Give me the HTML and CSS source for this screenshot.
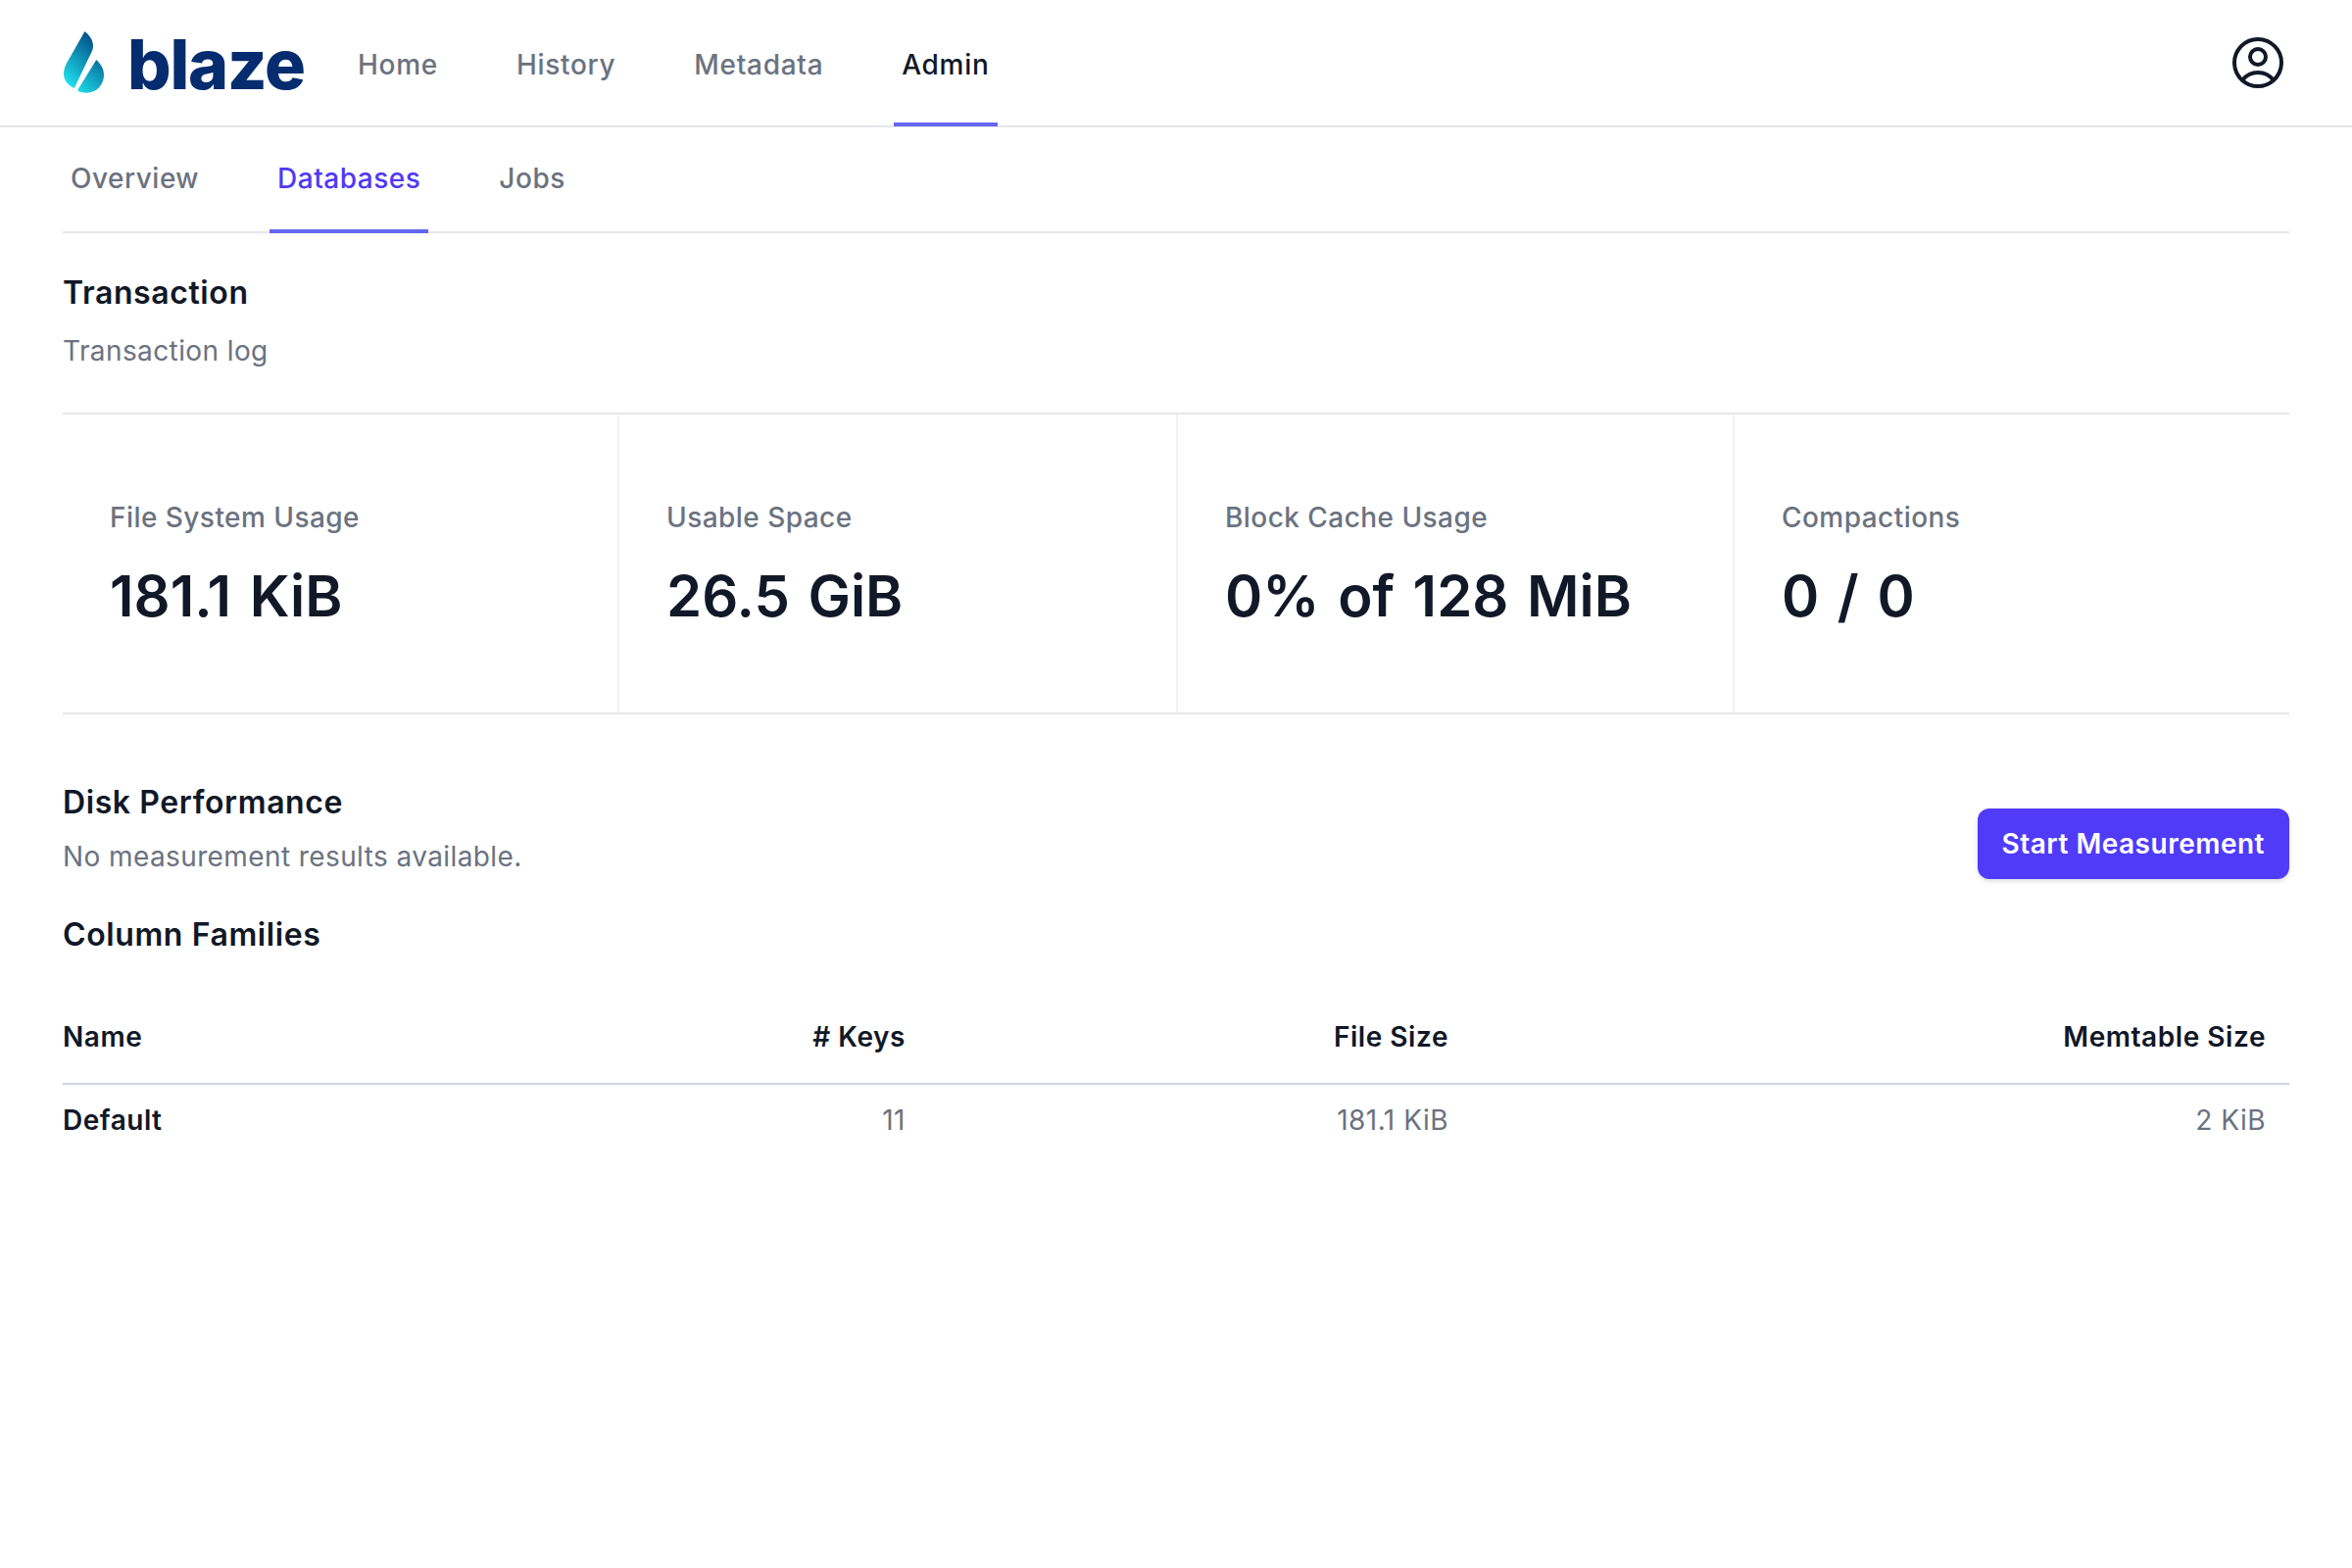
FILE: index.html
```html
<!DOCTYPE html>
<html lang="en">
<head>
    <meta charset="UTF-8">
    <title>Blaze Admin - Databases</title>
    <link rel="stylesheet" href="styles.css">
</head>
<body>
    <header class="top-bar">
        <div class="brand">
            <svg class="brand-drop" viewBox="0 0 42 63" width="42" height="63">
                <defs>
                    <linearGradient id="dropGrad" gradientUnits="userSpaceOnUse" x1="2" y1="56" x2="38" y2="18">
                        <stop offset="0" stop-color="#1fe9f2"/>
                        <stop offset="1" stop-color="#04568c"/>
                    </linearGradient>
                </defs>
                <path fill="url(#dropGrad)" d="M21.5 0C25 3 30 8 30 14.5C30 17 29.5 19 28.5 21L10.8 58C4.5 55 0 50 0 43.5C0 39 1.5 35 3.5 31.5Z"/>
                <path fill="url(#dropGrad)" d="M33.3 29C37.5 33 41 38 41 44.5C41 55 33 62.7 23.5 62.7C20 62.7 17 62 14 60.2Z"/>
            </svg>
            <span class="brand-name">blaze</span>
        </div>
        <nav class="main-nav">
            <a class="main-link">Home</a>
            <a class="main-link">History</a>
            <a class="main-link">Metadata</a>
            <a class="main-link main-link-active">Admin</a>
        </nav>
        <svg class="user-icon" viewBox="0 0 24 24" width="64" height="64" fill="none" stroke="#111827" stroke-width="1.5">
            <path stroke-linecap="round" stroke-linejoin="round" d="M17.982 18.725A7.488 7.488 0 0012 15.75a7.488 7.488 0 00-5.982 2.975m11.963 0a9 9 0 10-11.963 0m11.963 0A8.966 8.966 0 0112 21a8.966 8.966 0 01-5.982-2.275M15 9.75a3 3 0 11-6 0 3 3 0 016 0z"/>
        </svg>
    </header>

    <main class="page">
        <nav class="sub-nav">
            <a class="sub-link">Overview</a>
            <a class="sub-link sub-link-active">Databases</a>
            <a class="sub-link">Jobs</a>
        </nav>

        <section class="intro">
            <h2 class="section-title">Transaction</h2>
            <p class="section-text">Transaction log</p>
        </section>

        <div class="stats">
            <div class="stat">
                <div class="stat-label">File System Usage</div>
                <div class="stat-value">181.1 KiB</div>
            </div>
            <div class="stat">
                <div class="stat-label">Usable Space</div>
                <div class="stat-value">26.5 GiB</div>
            </div>
            <div class="stat">
                <div class="stat-label">Block Cache Usage</div>
                <div class="stat-value">0% of 128 MiB</div>
            </div>
            <div class="stat">
                <div class="stat-label">Compactions</div>
                <div class="stat-value">0 / 0</div>
            </div>
        </div>

        <section class="disk">
            <div class="disk-info">
                <h2 class="section-title">Disk Performance</h2>
                <p class="section-text">No measurement results available.</p>
            </div>
            <button class="primary-btn">Start Measurement</button>
        </section>

        <h2 class="section-title families-title">Column Families</h2>

        <table class="families">
            <thead>
                <tr>
                    <th class="col-name">Name</th>
                    <th class="col-keys">&#35; Keys</th>
                    <th class="col-file">File Size</th>
                    <th class="col-mem">Memtable Size</th>
                </tr>
            </thead>
            <tbody>
                <tr>
                    <td class="row-name">Default</td>
                    <td>11</td>
                    <td>181.1 KiB</td>
                    <td>2 KiB</td>
                </tr>
            </tbody>
        </table>
    </main>
</body>
</html>
```

FILE: styles.css
```css
* {
    box-sizing: border-box;
}

body {
    margin: 0;
    background-color: #fff;
    color: #111827;
    font-family: "Inter", "Noto Sans", sans-serif;
}

.top-bar {
    display: flex;
    align-items: center;
    height: 130px;
    padding: 0 64px 0 65px;
    border-bottom: 2px solid #e5e7eb;
}

.brand {
    display: flex;
    align-items: center;
    gap: 23px;
    width: 300px;
    margin-top: -2px;
}

.brand-name {
    padding-top: 4px;
    color: #052c6e;
    font-size: 70px;
    font-weight: 800;
    letter-spacing: -1.2px;
    line-height: 63px;
}

.main-nav {
    display: flex;
    gap: 64px;
    height: 130px;
    margin-left: -8px;
}

.main-link {
    display: flex;
    align-items: center;
    height: 130px;
    padding: 7px 8px 0;
    border-bottom: 4px solid transparent;
    color: #6b7280;
    font-size: 28px;
    font-weight: 500;
    letter-spacing: 0.7px;
}

.main-link-active {
    border-bottom-color: #6366f1;
    color: #111827;
}

.user-icon {
    margin-left: auto;
}

.page {
    padding: 0 64px;
}

.sub-nav {
    display: flex;
    gap: 64px;
    height: 108px;
    border-bottom: 2px solid #e5e7eb;
}

.sub-link {
    display: flex;
    align-items: center;
    height: 108px;
    padding: 0 8px;
    border-bottom: 4px solid transparent;
    color: #6b7280;
    font-size: 28px;
    font-weight: 500;
    letter-spacing: 0.5px;
}

.sub-link-active {
    border-bottom-color: #6366f1;
    color: #4f39f6;
}

.intro {
    height: 185px;
    padding-top: 41px;
    border-bottom: 2px solid #e5e7eb;
}

.section-title {
    margin: 0;
    font-size: 32px;
    font-weight: 600;
    letter-spacing: 0.6px;
    line-height: 40px;
}

.section-text {
    margin: 0;
    padding-top: 19px;
    color: #6b7280;
    font-size: 28px;
    letter-spacing: 0.4px;
    line-height: 40px;
}

.stats {
    display: grid;
    grid-template-columns: 568px 570px 568px 566px;
    height: 306px;
    border-bottom: 2px solid #e5e7eb;
}

.stat {
    padding: 85px 48px 0;
    border-right: 2px solid #f0f1f3;
}

.stat:last-child {
    border-right: 0;
}

.stat-label {
    color: #6b7280;
    font-size: 28px;
    font-weight: 500;
    letter-spacing: 0.45px;
    line-height: 40px;
}

.stat-value {
    margin-top: 28px;
    font-size: 58px;
    font-weight: 600;
    line-height: 64px;
    word-spacing: 4px;
}

.disk {
    display: flex;
    justify-content: space-between;
    align-items: flex-start;
    padding-top: 70px;
}

.disk-info .section-text {
    padding-top: 15px;
}

.primary-btn {
    height: 72px;
    margin-top: 26px;
    padding: 0 25px;
    border: 0;
    border-radius: 12px;
    background-color: #503bf9;
    box-shadow: 0 2px 5px rgba(0, 0, 0, 0.15);
    color: #fff;
    font-family: inherit;
    font-size: 28px;
    font-weight: 600;
    letter-spacing: 0.5px;
}

.families-title {
    margin-top: 37px;
}

.families {
    width: 100%;
    margin-top: 47px;
    border-collapse: collapse;
    table-layout: fixed;
}

.families th {
    height: 85px;
    padding: 0 24px 11px 0;
    border-bottom: 2px solid #d1d5db;
    font-size: 28px;
    font-weight: 600;
    letter-spacing: 0.55px;
    text-align: right;
}

.families td {
    height: 72px;
    padding: 0 24px 0 0;
    color: #6b7280;
    font-size: 28px;
    letter-spacing: 0.5px;
    text-align: right;
}

.families .col-name,
.families .row-name {
    color: #111827;
    font-weight: 600;
    text-align: left;
}

.col-name {
    width: 440px;
}

.col-keys {
    width: 444px;
}

.col-file {
    width: 554px;
}
```
